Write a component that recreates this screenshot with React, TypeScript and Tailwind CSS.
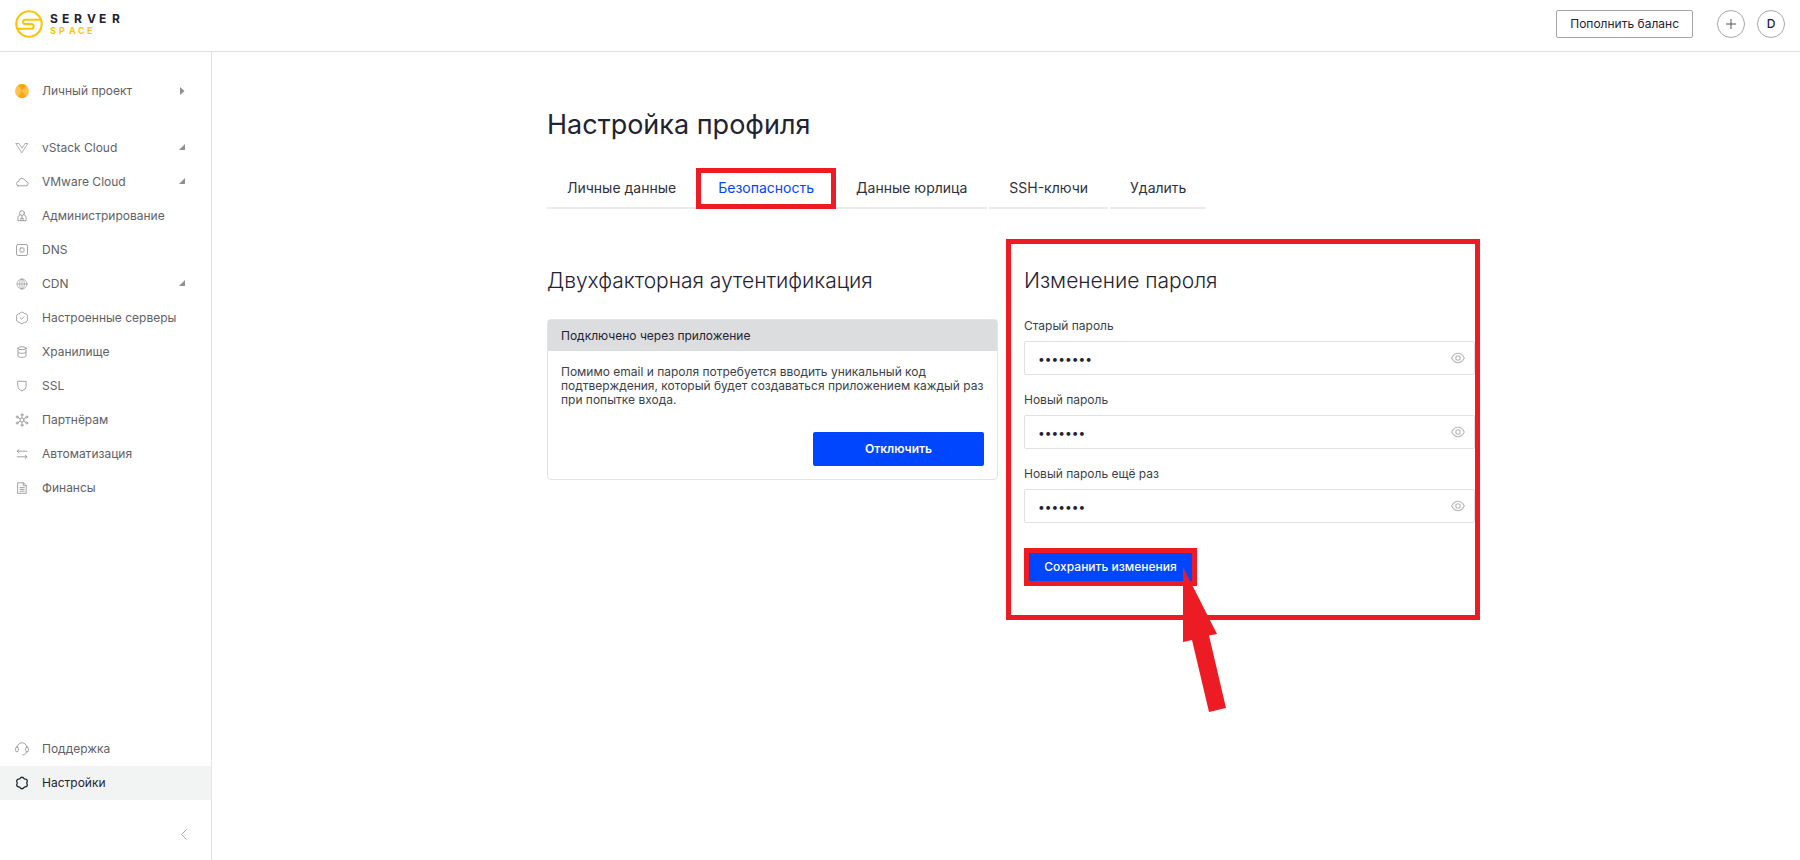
import { useState, type ReactNode } from "react";

interface NavItem {
  label: string;
  icon: ReactNode;
  expandable?: boolean;
  active?: boolean;
}

interface PasswordFieldProps {
  id: string;
  label: string;
  initialValue: string;
}

const Icon = ({ children }: { children: ReactNode }) => (
  <svg
    viewBox="0 0 14 14"
    className="size-[14px] shrink-0"
    fill="none"
    stroke="currentColor"
    strokeWidth="0.9"
    strokeLinecap="round"
    strokeLinejoin="round"
    aria-hidden="true"
  >
    {children}
  </svg>
);

const mainNav: NavItem[] = [
  {
    label: "vStack Cloud",
    expandable: true,
    icon: <path strokeWidth="0.8" d="M1.200 2.500h2.800L7 7.200l3-4.700h2.800L7 11.500z" />,
  },
  {
    label: "VMware Cloud",
    expandable: true,
    icon: (
      <path d="M3.200 10.800h7.600a2.200 2.200 0 0 0 .2-4.400 2 2 0 0 0-1.300-1.400 3.200 3.200 0 0 0-6 1.300 2.300 2.300 0 0 0-.5 4.500z" />
    ),
  },
  {
    label: "Администрирование",
    icon: (
      <>
        <circle cx="7" cy="4" r="2.400" />
        <path d="M5.100 5.600C3.400 6.200 2.900 7.600 2.900 9v2.700h8.200V9c0-1.400-.5-2.800-2.200-3.400M7 6.400v3M5.800 11.600V9.400h2.400v2.200" />
      </>
    ),
  },
  {
    label: "DNS",
    icon: (
      <>
        <rect x="1.500" y="1.500" width="11" height="11" rx="1.600" />
        <rect x="5" y="5" width="4" height="4" rx="0.800" />
      </>
    ),
  },
  {
    label: "CDN",
    expandable: true,
    icon: (
      <g strokeWidth="0.7">
        <circle cx="7" cy="7" r="5" />
        <ellipse cx="7" cy="7" rx="2.400" ry="5" />
        <path d="M2 7h10M7 2v10" />
      </g>
    ),
  },
  {
    label: "Настроенные серверы",
    icon: (
      <>
        <path d="M4.600 2.500Q7-.4 9.400 2.500 13.600 3.200 12.200 7 13.600 10.800 9.400 11.500 7 14.400 4.600 11.500.4 10.800 1.800 7 .4 3.200 4.600 2.500z" />
        <path d="m5.200 7 1.400 1.300 2.300-2.500" />
      </>
    ),
  },
  {
    label: "Хранилище",
    icon: (
      <>
        <ellipse cx="7" cy="3.200" rx="4" ry="1.500" />
        <path d="M3 3.200v7.800c0 .8 1.800 1.400 4 1.400s4-.6 4-1.400V3.200M3 7c0 .8 1.800 1.300 4 1.300s4-.5 4-1.300" />
      </>
    ),
  },
  {
    label: "SSL",
    icon: <path d="M2.900 2.300h8.200v5.200c0 2-1.500 3.300-4.100 4.400-2.600-1.100-4.100-2.400-4.100-4.400z" />,
  },
  {
    label: "Партнёрам",
    icon: (
      <>
        <circle cx="7" cy="7" r="2" />
        <circle cx="7" cy="1.800" r="1" />
        <circle cx="7" cy="12.200" r="1" />
        <circle cx="2.200" cy="4" r="1" />
        <circle cx="11.800" cy="4" r="1" />
        <circle cx="2.200" cy="10" r="1" />
        <circle cx="11.800" cy="10" r="1" />
        <path d="M7 2.800V5M7 9v2.200M3.100 4.600l2.200 1.300M10.900 4.600 8.700 5.900M3.100 9.400l2.200-1.300M10.900 9.400 8.700 8.100" />
      </>
    ),
  },
  {
    label: "Автоматизация",
    icon: <path d="M12 4.200H2.200M4 2.600 2.200 4.200 4 5.800M2.200 9.800H12M10.200 8.200 12 9.800l-1.800 1.600" />,
  },
  {
    label: "Финансы",
    icon: (
      <path d="M3 1.800h5.500l2.700 2.700v7.800H3zM8.300 1.900v2.800h2.800M5 6.600h4.200M5 8.400h4.200M5 10.200h4.200" />
    ),
  },
];

const bottomNav: NavItem[] = [
  {
    label: "Поддержка",
    icon: (
      <>
        <path d="M2.200 5C2.600 2.400 4.500.8 7 .8S11.400 2.400 11.800 5M11.800 9.800c-.2 1.800-1.400 2.900-4 3.100" />
        <rect x="0.600" y="5" width="2.700" height="4.800" rx="1.300" />
        <rect x="10.700" y="5" width="2.700" height="4.800" rx="1.300" />
      </>
    ),
  },
  {
    label: "Настройки",
    active: true,
    icon: (
      <path
        strokeWidth="1.300"
        d="M4.600 2.900Q7-.4 9.400 2.900 13.700 3.200 11.700 7 13.700 10.800 9.400 11.100 7 14.400 4.600 11.100.3 10.800 2.300 7 .3 3.200 4.600 2.900z"
      />
    ),
  },
];

const tabs = ["Личные данные", "Безопасность", "Данные юрлица", "SSH-ключи", "Удалить"];

const Logo = () => (
  <svg width="108" height="28" viewBox="0 0 108 28" role="img" aria-label="Server Space">
    <g fill="none" stroke="#fdc30b" strokeWidth="2.100">
      <circle cx="14" cy="14" r="12.700" />
      <path d="M26 9.700H10.300a2.200 2.200 0 0 0 0 4.400h6a2.300 2.300 0 0 1 0 4.600H2.300" />
    </g>
    <text x="35 47 59 72 84 97" y="13" className="fill-[#1c2233] text-[12px] font-bold">
      SERVER
    </text>
    <text x="35 44 54 63 72" y="24" className="fill-[#fdc30b] text-[9px] font-bold">
      SPACE
    </text>
  </svg>
);

const NavLink = ({ label, icon, expandable, active }: NavItem) => (
  <a
    href="#"
    className={
      active
        ? "flex h-[34px] items-center gap-[13px] bg-[#f2f4f4] pl-[15px] pr-[26px] text-[#1f2333]"
        : "flex h-[34px] items-center gap-[13px] pl-[15px] pr-[26px] text-[#5f6166]"
    }
  >
    <span className={active ? "text-[#1f2333]" : "text-[#999]"}>
      <Icon>{icon}</Icon>
    </span>
    <span className="flex-1 whitespace-nowrap">{label}</span>
    {expandable && (
      <svg width="6" height="8" viewBox="0 0 6 8" aria-hidden="true">
        <path d="M6 0v6H0z" fill="#8d8f92" />
      </svg>
    )}
  </a>
);

const PasswordField = ({ id, label, initialValue }: PasswordFieldProps) => {
  const [value, setValue] = useState(initialValue);
  const [visible, setVisible] = useState(false);

  return (
    <div>
      <label htmlFor={id} className="block text-xs text-[#3c3f48]">
        {label}
      </label>
      <div className="relative mt-[7px]">
        <input
          id={id}
          type={visible ? "text" : "password"}
          value={value}
          onChange={(e) => setValue(e.target.value)}
          className="h-[34px] w-full rounded-xs border border-[#e0e1e3] pl-[13px] pr-10 text-xs text-[#1f2333] outline-none focus:border-[#0045ff]"
        />
        <button
          type="button"
          onClick={() => setVisible(!visible)}
          aria-label={visible ? "Скрыть пароль" : "Показать пароль"}
          className="absolute inset-y-0 right-0 flex items-center px-[10px] text-[#b5b5b5]"
        >
          <svg width="14" height="12" viewBox="0 0 14 12" fill="none" stroke="currentColor" strokeWidth="1.100">
            <path d="M.7 6C2.300 2.800 4.400 1.300 7 1.300S11.700 2.800 13.300 6C11.700 9.200 9.600 10.700 7 10.700S2.300 9.200.7 6z" />
            <circle cx="7" cy="6" r="2.200" />
          </svg>
        </button>
      </div>
    </div>
  );
};

export default function App() {
  const [activeTab, setActiveTab] = useState("Безопасность");

  return (
    <div className="flex min-h-screen flex-col bg-white font-['Inter',sans-serif] text-xs text-[#1f2333]">
      {/* ------------------------------- Header ------------------------------- */}
      <header className="flex h-[52px] items-center justify-between border-b border-[#dfe0e1] px-[15px] pb-[3px]">
        <a href="#">
          <Logo />
        </a>
        <div className="flex items-center">
          <button type="button" className="h-7 rounded-xs border border-[#a5a7ab] px-[13px]">
            Пополнить баланс
          </button>
          <button
            type="button"
            aria-label="Создать"
            className="ml-6 flex size-7 items-center justify-center rounded-full border border-[#a5a7ab] text-[#55575f]"
          >
            <svg width="10" height="10" viewBox="0 0 10 10" stroke="currentColor" aria-hidden="true">
              <path d="M5 0v10M0 5h10" />
            </svg>
          </button>
          <button
            type="button"
            className="ml-3 flex size-7 items-center justify-center rounded-full border border-[#a5a7ab] font-medium"
          >
            D
          </button>
        </div>
      </header>

      <div className="flex flex-1">
        {/* ------------------------------ Sidebar ------------------------------ */}
        <aside className="flex w-[212px] shrink-0 flex-col border-r border-[#e3e4e5] pt-[22px]">
          <a href="#" className="flex h-[34px] items-center gap-[13px] pl-[15px] pr-[26px] text-[#5f6166]">
            <svg viewBox="0 0 14 14" className="size-[14px]" aria-hidden="true">
              <circle cx="7" cy="7" r="7" fill="#ffc34d" />
              <path d="M7 7 3 1.300a7 7 0 0 1 8 0zM7 7l4 5.700a7 7 0 0 1-8 0z" fill="#ffa50d" />
            </svg>
            <span className="flex-1">Личный проект</span>
            <svg width="5" height="8" viewBox="0 0 5 8" aria-hidden="true">
              <path d="M0 0v8l4.500-4z" fill="#8d8f92" />
            </svg>
          </a>

          <nav className="mt-[23px]">
            {mainNav.map((item) => (
              <NavLink key={item.label} {...item} />
            ))}
          </nav>

          <nav className="mt-auto">
            {bottomNav.map((item) => (
              <NavLink key={item.label} {...item} />
            ))}
          </nav>

          <div className="flex h-[60px] items-center justify-end pt-2 pr-6">
            <button type="button" aria-label="Свернуть меню" className="text-[#a0a0a0]">
              <svg width="6" height="11" viewBox="0 0 6 11" fill="none" stroke="currentColor">
                <path d="M5.500.5.700 5.500l4.800 5" />
              </svg>
            </button>
          </div>
        </aside>

        {/* ------------------------------ Content ------------------------------ */}
        <main className="flex-1">
          <div className="mx-auto max-w-[942px] pt-[55px] pr-0.5 pl-3">
            <h1 className="text-[27px] leading-9">Настройка профиля</h1>

            <div role="tablist" className="mt-[25px] flex gap-0.5">
              {tabs.map((tab) => (
                <button
                  key={tab}
                  type="button"
                  role="tab"
                  aria-selected={tab === activeTab}
                  onClick={() => setActiveTab(tab)}
                  className={
                    tab === activeTab
                      ? "relative h-[41px] border-b-2 border-transparent px-5 text-sm text-[#0045ff]"
                      : "h-[41px] border-b-2 border-[#ebebeb] px-5 text-sm text-[#2f323c]"
                  }
                >
                  {tab}
                  {tab === activeTab && (
                    <span className="absolute -inset-x-0.5 top-0 -bottom-0.5 border-5 border-[#ed1c24]" />
                  )}
                </button>
              ))}
            </div>

            <div className="mt-[56px] grid grid-cols-2 gap-[26px]">
              <section>
                <h2 className="text-[21px] leading-8 font-light">Двухфакторная аутентификация</h2>
                <div className="mt-[22px] rounded-sm border border-[#e3e4e5]">
                  <div className="flex h-[31px] items-center bg-[#dcdddf] px-[13px]">
                    Подключено через приложение
                  </div>
                  <div className="px-[13px] pt-[14px] pb-[13px]">
                    <p className="leading-[14px] text-[#3c3f48]">
                      Помимо email и пароля потребуется вводить уникальный код подтверждения, который
                      будет создаваться приложением каждый раз при попытке входа.
                    </p>
                    <div className="mt-[25px] flex justify-end">
                      <button
                        type="button"
                        className="h-[34px] w-[171px] rounded-xs bg-[#0045ff] font-semibold text-white"
                      >
                        Отключить
                      </button>
                    </div>
                  </div>
                </div>
              </section>

              <section className="relative">
                <div className="pointer-events-none absolute -top-[26px] -right-[5px] -left-[18px] h-[381px] border-5 border-[#ed1c24]" />
                <h2 className="text-[21px] leading-8 font-light">Изменение пароля</h2>
                <form className="mt-[21px]" onSubmit={(e) => e.preventDefault()}>
                  <div className="space-y-[17px]">
                    <PasswordField id="old-password" label="Старый пароль" initialValue="password" />
                    <PasswordField id="new-password" label="Новый пароль" initialValue="secret1" />
                    <PasswordField id="repeat-password" label="Новый пароль ещё раз" initialValue="secret1" />
                  </div>
                  <div className="relative mt-[25px] w-fit">
                    <button
                      type="submit"
                      className="h-[38px] w-[173px] border-5 border-[#ed1c24] bg-[#0045ff] font-medium text-white"
                    >
                      Сохранить изменения
                    </button>
                    <svg
                      width="44"
                      height="146"
                      viewBox="0 0 44 146"
                      className="pointer-events-none absolute top-[19px] left-[159px]"
                      aria-hidden="true"
                    >
                      <path d="M0 0 34 67l-8 1.500L43 141l-17 4L9 73l-9 2z" fill="#ed1c24" />
                    </svg>
                  </div>
                </form>
              </section>
            </div>
          </div>
        </main>
      </div>
    </div>
  );
}
